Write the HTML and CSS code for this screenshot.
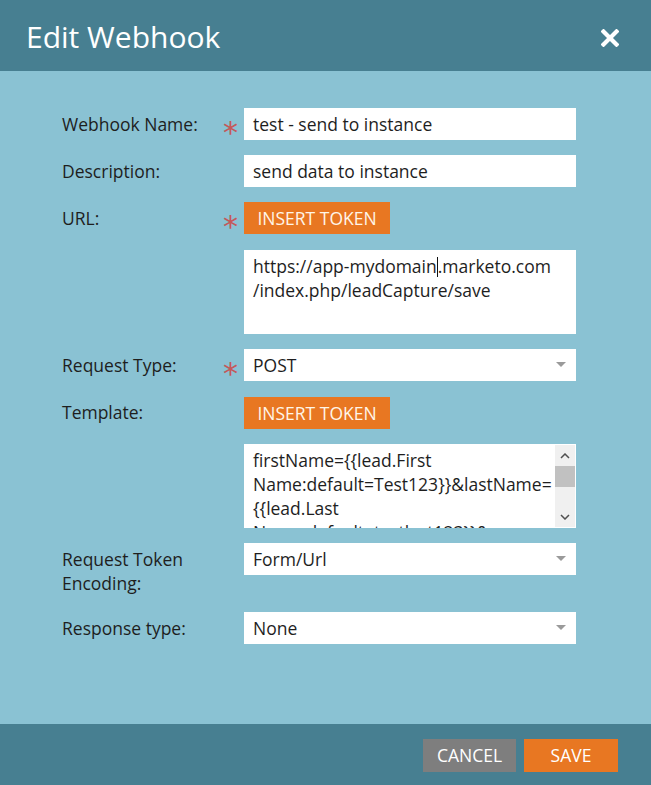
FILE: index.html
```html
<!DOCTYPE html>
<html>
<head>
<meta charset="utf-8">
<link rel="stylesheet" href="styles.css">
</head>
<body>
<div class="dialog">
  <div class="header">
    <div class="title">Edit Webhook</div>
    <svg class="close" width="18" height="18" viewBox="0 0 18 18"><path d="M2.5 2.5 L15.5 15.5 M15.5 2.5 L2.5 15.5" stroke="#fff" stroke-width="4.2" stroke-linecap="square"/></svg>
  </div>
  <div class="body">
    <div class="form">
      <div class="label">Webhook Name:</div>
      <div class="star">*</div>
      <div class="input">test - send to instance</div>

      <div class="label">Description:</div>
      <div class="star"></div>
      <div class="input">send data to instance</div>

      <div class="label">URL:</div>
      <div class="star">*</div>
      <div class="field"><span class="btn-token">INSERT TOKEN</span></div>

      <div class="label"></div>
      <div class="star"></div>
      <div class="textarea gap16">https://app-mydomain<span class="caret"></span>.marketo.com<br>/index.php/leadCapture/save</div>

      <div class="label">Request Type:</div>
      <div class="star">*</div>
      <div class="select">POST<span class="arrow"></span></div>

      <div class="label">Template:</div>
      <div class="star"></div>
      <div class="field gap16"><span class="btn-token">INSERT TOKEN</span></div>

      <div class="label"></div>
      <div class="star"></div>
      <div class="textarea scroll">
        <div class="ta-text">firstName={{lead.First<br>Name:default=Test123}}&amp;lastName=<br>{{lead.Last<br>Name:default=testlast123}}&amp;</div>
        <div class="sbar">
          <svg class="sb-up" width="10" height="6" viewBox="0 0 10 6"><path d="M1 5 L5 1 L9 5" fill="none" stroke="#505050" stroke-width="1.5"/></svg>
          <div class="thumb"></div>
          <svg class="sb-down" width="10" height="6" viewBox="0 0 10 6"><path d="M1 1 L5 5 L9 1" fill="none" stroke="#505050" stroke-width="1.5"/></svg>
        </div>
      </div>

      <div class="label two">Request Token<br>Encoding:</div>
      <div class="star"></div>
      <div class="select">Form/Url<span class="arrow"></span></div>

      <div class="label">Response type:</div>
      <div class="star"></div>
      <div class="select">None<span class="arrow"></span></div>
    </div>
  </div>
  <div class="footer">
    <span class="btn cancel">CANCEL</span>
    <span class="btn save">SAVE</span>
  </div>
</div>
</body>
</html>
```
FILE: styles.css
```css
html, body {
  margin: 0;
  padding: 0;
}
body {
  font-family: "Open Sans", "Liberation Sans", sans-serif;
  background: #8ac2d3;
}
.dialog {
  width: 651px;
  height: 785px;
  display: flex;
  flex-direction: column;
}
.header {
  height: 71px;
  background: #477f91;
  display: flex;
  align-items: center;
  justify-content: space-between;
  padding: 0 32px 0 26px;
}
.title {
  color: #fff;
  font-size: 30px;
  line-height: 36px;
  margin-top: 3px;
}
.close {
  display: block;
  margin-top: 4px;
}
.body {
  flex: 1;
  background: #8ac2d3;
  padding: 37px 0 0 62px;
}
.form {
  display: grid;
  grid-template-columns: 160px 22px 332px;
  row-gap: 15px;
  align-items: start;
}
.label {
  font-size: 17.5px;
  line-height: 24px;
  padding-top: 4px;
  color: #1e1e1e;
}
.label.two {
  padding-bottom: 2px;
}
.star {
  color: #c4585a;
  font-size: 30px;
  line-height: 30px;
  height: 32px;
  box-sizing: border-box;
  padding-top: 10px;
  padding-left: 1px;
  overflow: visible;
  font-family: "DejaVu Sans", sans-serif;
}
.star:empty {
  padding: 0;
}
.input, .select {
  height: 32px;
  background: #fff;
  font-size: 17.5px;
  line-height: 32px;
  padding-left: 9px;
  color: #1e1e1e;
  box-sizing: border-box;
  position: relative;
}
.field {
  height: 32px;
}
.gap16 {
  margin-top: 1px;
}
.btn-token {
  display: inline-block;
  height: 32px;
  width: 146px;
  box-sizing: border-box;
  background: #e87722;
  color: #fff5e8;
  font-size: 17.5px;
  line-height: 32px;
  text-align: center;
}
.textarea {
  height: 84px;
  background: #fff;
  box-sizing: border-box;
  padding: 4px 0 0 9px;
  font-size: 17.5px;
  line-height: 24px;
  color: #1e1e1e;
  overflow: hidden;
}
.caret {
  display: inline-block;
  width: 1px;
  height: 20px;
  background: #111;
  vertical-align: -4px;
}
.textarea.scroll {
  display: flex;
  padding: 0;
}
.ta-text {
  flex: 1;
  padding: 4px 0 0 9px;
  white-space: nowrap;
  overflow: hidden;
}
.sbar {
  width: 20px;
  margin: 1px 1px 1px 0;
  background: #f0f0f0;
  position: relative;
  flex: none;
}
.sb-up {
  position: absolute;
  left: 5px;
  top: 8px;
}
.sb-down {
  position: absolute;
  left: 5px;
  bottom: 7px;
}
.thumb {
  position: absolute;
  left: 0;
  right: 0;
  top: 21px;
  height: 21px;
  background: #c1c1c1;
}
.arrow {
  position: absolute;
  right: 10px;
  top: 13px;
  width: 0;
  height: 0;
  border-left: 5px solid transparent;
  border-right: 5px solid transparent;
  border-top: 5px solid #9a9a9a;
}
.footer {
  height: 61px;
  background: #477f91;
  display: flex;
  justify-content: flex-end;
  align-items: flex-start;
  padding: 15px 33px 0 0;
  box-sizing: border-box;
  gap: 8px;
}
.btn {
  display: inline-block;
  height: 33px;
  line-height: 33px;
  font-size: 17.5px;
  color: #fff;
  text-align: center;
}
.cancel {
  width: 93px;
  background: #7e7e7e;
}
.save {
  width: 94px;
  background: #e87722;
}
```
